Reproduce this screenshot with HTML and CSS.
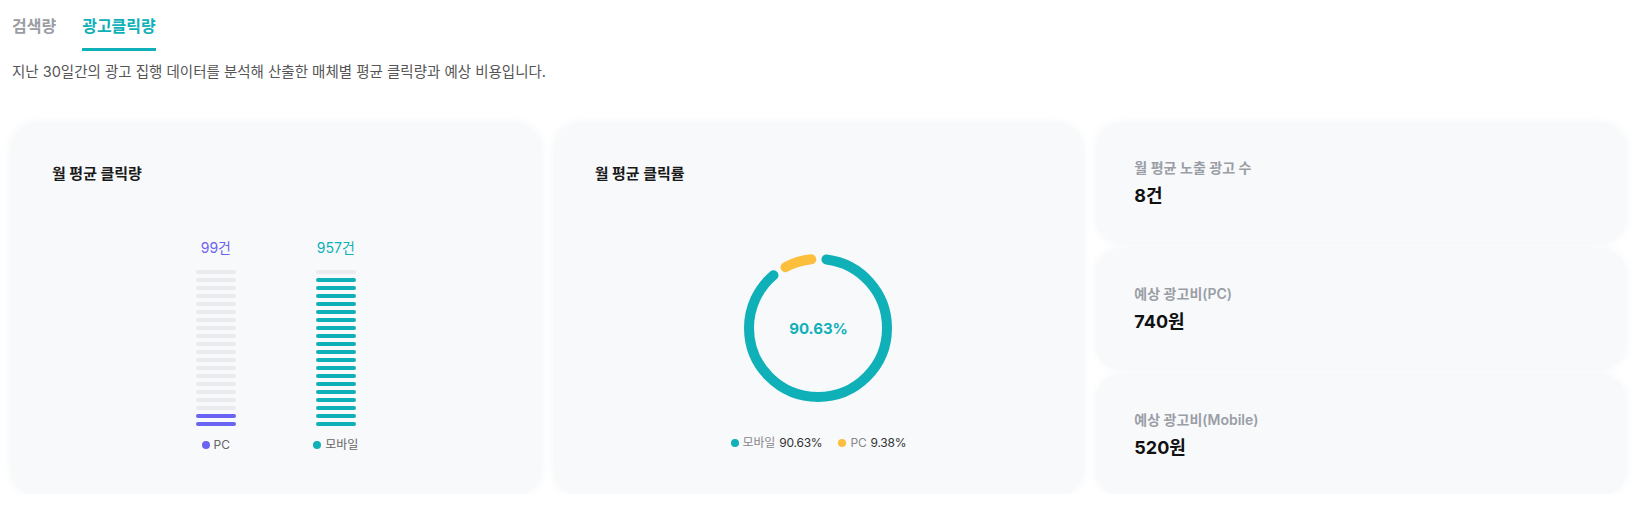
FILE: index.html
```html
<!DOCTYPE html>
<html lang="ko">
<head>
    <meta charset="UTF-8">
    <meta name="viewport" content="width=device-width, initial-scale=1.0">
    <title>광고클릭량</title>
    <link rel="stylesheet" href="styles.css">
</head>
<body>

<div class="page">
    <nav class="tabs">
        <div class="tab">검색량</div>
        <div class="tab active">광고클릭량</div>
    </nav>
    <p class="desc">지난 30일간의 광고 집행 데이터를 분석해 산출한 매체별 평균 클릭량과 예상 비용입니다.</p>

    <div class="grid">
        <!-- 월 평균 클릭량 -->
        <section class="card chart-card">
            <h3 class="card-title">월 평균 클릭량</h3>
            <div class="bars">
                <div class="bar-col pc">
                    <div class="bar-value">99건</div>
                    <div class="stack">
                        <span class="seg"></span><span class="seg"></span><span class="seg"></span><span class="seg"></span>
                        <span class="seg"></span><span class="seg"></span><span class="seg"></span><span class="seg"></span>
                        <span class="seg"></span><span class="seg"></span><span class="seg"></span><span class="seg"></span>
                        <span class="seg"></span><span class="seg"></span><span class="seg"></span><span class="seg"></span>
                        <span class="seg"></span><span class="seg"></span><span class="seg on"></span><span class="seg on"></span>
                    </div>
                    <div class="bar-legend"><i class="dot"></i>PC</div>
                </div>
                <div class="bar-col mobile">
                    <div class="bar-value">957건</div>
                    <div class="stack">
                        <span class="seg"></span><span class="seg on"></span><span class="seg on"></span><span class="seg on"></span>
                        <span class="seg on"></span><span class="seg on"></span><span class="seg on"></span><span class="seg on"></span>
                        <span class="seg on"></span><span class="seg on"></span><span class="seg on"></span><span class="seg on"></span>
                        <span class="seg on"></span><span class="seg on"></span><span class="seg on"></span><span class="seg on"></span>
                        <span class="seg on"></span><span class="seg on"></span><span class="seg on"></span><span class="seg on"></span>
                    </div>
                    <div class="bar-legend"><i class="dot"></i>모바일</div>
                </div>
            </div>
        </section>

        <!-- 월 평균 클릭률 -->
        <section class="card chart-card">
            <h3 class="card-title">월 평균 클릭률</h3>
            <div class="donut">
                <svg width="150" height="150" viewBox="0 0 150 150">
                    <circle class="arc arc-mobile" cx="75" cy="75" r="69" transform="rotate(-90 75 75)"
                            stroke-dasharray="376 434" stroke-dashoffset="-8.5"/>
                    <circle class="arc arc-pc" cx="75" cy="75" r="69" transform="rotate(-90 75 75)"
                            stroke-dasharray="27 434" stroke-dashoffset="-399"/>
                </svg>
                <div class="donut-label">90.63%</div>
            </div>
            <div class="donut-legend">
                <div class="legend-item"><i class="dot mobile"></i><span class="name">모바일</span>90.63%</div>
                <div class="legend-item"><i class="dot pc"></i><span class="name">PC</span>9.38%</div>
            </div>
        </section>

        <!-- 요약 수치 -->
        <div class="stats">
            <div class="card stat">
                <div class="stat-label">월 평균 노출 광고 수</div>
                <div class="stat-value">8건</div>
            </div>
            <div class="card stat">
                <div class="stat-label">예상 광고비(PC)</div>
                <div class="stat-value">740원</div>
            </div>
            <div class="card stat">
                <div class="stat-label">예상 광고비(Mobile)</div>
                <div class="stat-value">520원</div>
            </div>
        </div>
    </div>
</div>

</body>
</html>
```

FILE: styles.css
```css
body, html {
    margin: 0;
    padding: 0;
    background: #fff;
    font-family: "Inter", "Noto Sans CJK KR", sans-serif;
    color: #1a1a1a;
}

.page {
    padding: 14px 8px 0 12px;
}

/* 탭 */
.tabs {
    display: flex;
    gap: 26px;
}

.tab {
    font-size: 16px;
    font-weight: 700;
    line-height: 24px;
    color: #9b9da4;
    padding-bottom: 10px;
    border-bottom: 3px solid transparent;
}

.tab.active {
    color: #0fb0b8;
    border-bottom-color: #0fb0b8;
}

.desc {
    margin: 11px 0 0;
    font-size: 14.5px;
    line-height: 20px;
    color: #555;
}

.grid {
    margin-top: 42px;
    display: grid;
    grid-template-columns: 1fr 1fr 1fr;
    gap: 15px;
    height: 370px;
}

.card {
    background: #f8f9fb;
    border-radius: 24px;
    box-shadow: 0 0 8px rgba(236, 239, 244, 0.9);
}

.chart-card {
    padding: 40px;
    display: flex;
    flex-direction: column;
    align-items: center;
}

.card-title {
    align-self: flex-start;
    margin: 0;
    font-size: 15px;
    font-weight: 700;
    line-height: 20px;
    color: #1a1a1a;
}

/* 막대 차트 */
.bars {
    display: flex;
    gap: 80px;
    margin-top: 54px;
}

.bar-col {
    width: 40px;
    display: flex;
    flex-direction: column;
    align-items: center;
}

.bar-value {
    font-size: 14px;
    line-height: 20px;
}

.bar-col.pc .bar-value { color: #6b63f2; }
.bar-col.mobile .bar-value { color: #0fb0b8; }

.stack {
    margin-top: 12px;
    display: flex;
    flex-direction: column;
    gap: 4px;
    width: 40px;
}

.seg {
    height: 4px;
    border-radius: 2px;
    background: #e9ebee;
}

.bar-col.pc .seg.on { background: #6b63f2; }
.bar-col.mobile .seg.on { background: #0fb0b8; }

.bar-legend {
    margin-top: 11px;
    display: flex;
    align-items: center;
    gap: 4px;
    font-size: 12px;
    line-height: 16px;
    color: #666;
    white-space: nowrap;
}

.dot {
    width: 8px;
    height: 8px;
    border-radius: 50%;
    display: inline-block;
}

.bar-col.pc .dot { background: #6b63f2; }
.bar-col.mobile .dot { background: #0fb0b8; }

/* 도넛 차트 */
.donut {
    position: relative;
    width: 150px;
    height: 150px;
    margin-top: 69px;
}

.arc {
    fill: none;
    stroke-width: 10;
    stroke-linecap: round;
}

.arc-mobile { stroke: #0fb0b8; }
.arc-pc { stroke: #fbbf3c; }

.donut-label {
    position: absolute;
    top: 50%;
    left: 50%;
    transform: translate(-50%, -50%);
    font-size: 15px;
    font-weight: 700;
    color: #0fb0b8;
}

.donut-legend {
    margin-top: 32px;
    display: flex;
    gap: 16px;
}

.legend-item {
    display: flex;
    align-items: center;
    gap: 4px;
    font-size: 12px;
    line-height: 16px;
    color: #333;
    letter-spacing: -0.2px;
}

.legend-item .name {
    color: #888;
}

.dot.mobile { background: #0fb0b8; }
.dot.pc { background: #fbbf3c; }

/* 요약 카드 */
.stats {
    display: flex;
    flex-direction: column;
    gap: 8px;
}

.stat {
    flex: 1;
    padding: 0 37px;
    display: flex;
    flex-direction: column;
    justify-content: center;
    gap: 6px;
}

.stat-label {
    font-size: 14px;
    font-weight: 600;
    line-height: 20px;
    color: #9a9ea6;
}

.stat-value {
    font-size: 18px;
    font-weight: 700;
    line-height: 24px;
    color: #111;
}
```
